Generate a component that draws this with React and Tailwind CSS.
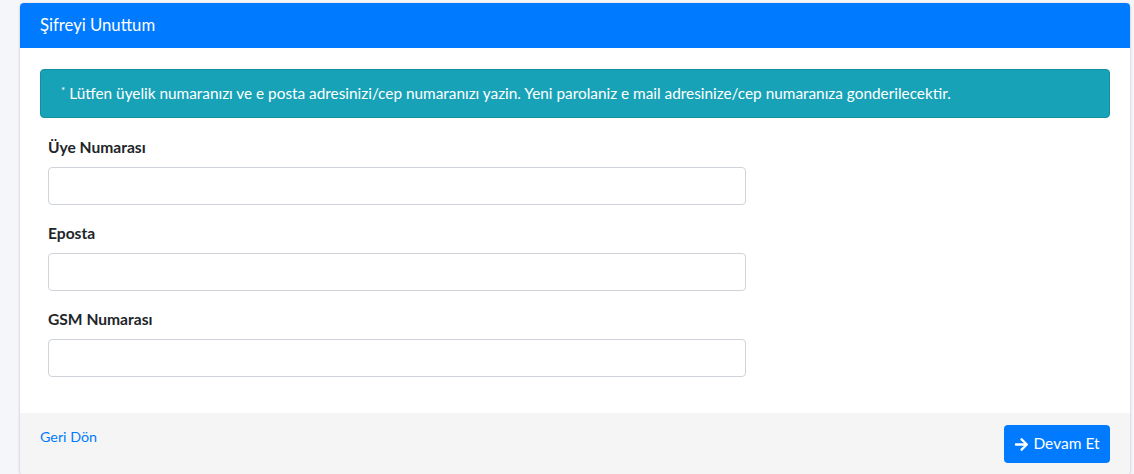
import React from "react";

function Field({ label }) {
  return (
    <div className="mb-4">
      <label className="block mb-2 text-[15.6px] leading-6 font-bold text-[#212529]">{label}</label>
      <input
        type="text"
        className="block w-[698px] h-[38px] rounded-[4px] border border-[#ced4da] bg-white px-3 outline-none"
      />
    </div>
  );
}

export default function App() {
  return (
    <div
      className="min-h-[474px] bg-[#f4f6f9] pt-[3px] pl-[20px] pr-[4px]"
      style={{ fontFamily: "Lato, 'Liberation Sans', sans-serif" }}
    >
      <div className="rounded-[4px] bg-white shadow-[0_0_1px_rgba(0,0,0,0.125),0_1px_3px_rgba(0,0,0,0.2)] overflow-hidden">
        <div className="h-[45px] bg-[#007bff] px-5 flex items-center text-white text-[16.7px]">
          Şifreyi Unuttum
        </div>
        <div className="px-5 pt-[21px] pb-5">
          <div className="h-[49px] rounded-[4px] border border-[#148ea1] bg-[#17a2b8] px-5 flex items-center text-white text-[15.35px]">
            <span>
              <sup className="text-[10px]">*</sup> Lütfen üyelik numaranızı ve e posta adresinizi/cep numaranızı yazin. Yeni parolaniz e mail adresinize/cep numaranıza gonderilecektir.
            </span>
          </div>
          <div className="px-2 pt-[17px]">
            <Field label="Üye Numarası" />
            <Field label="Eposta" />
            <Field label="GSM Numarası" />
          </div>
        </div>
        <div className="bg-[#f5f5f5] px-5 py-3 flex justify-between items-start">
          <a href="#" className="text-[#007bff] text-[14.3px] leading-6">Geri Dön</a>
          <button className="h-[38px] w-[106px] rounded-[4px] bg-[#007bff] text-white text-[15.5px] flex items-center justify-center gap-1">
            <svg width="15" height="15" viewBox="0 0 448 512" fill="currentColor">
              <path d="M190.5 66.9l22.2-22.2c9.4-9.4 24.6-9.4 33.9 0L441 239c9.4 9.4 9.4 24.6 0 33.9L246.6 467.3c-9.4 9.4-24.6 9.4-33.9 0l-22.2-22.2c-9.5-9.5-9.3-25 .4-34.3L311.4 296H24c-13.3 0-24-10.7-24-24v-32c0-13.3 10.7-24 24-24h287.4L190.9 101.2c-9.8-9.3-10-24.8-.4-34.3z" />
            </svg>
            Devam Et
          </button>
        </div>
      </div>
    </div>
  );
}
